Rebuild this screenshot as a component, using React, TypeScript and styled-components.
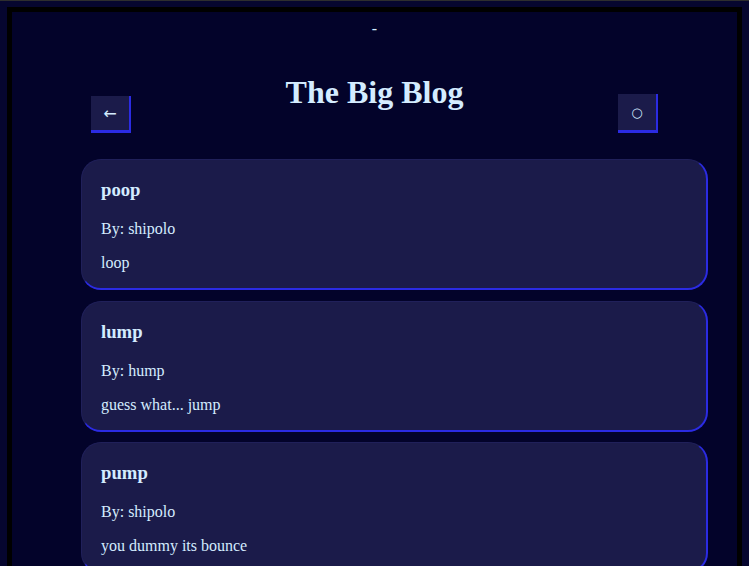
import React from "react";
import styled, { createGlobalStyle } from "styled-components";

const Global = createGlobalStyle`
  html {
    background: #06062f;
    border-top: 1px solid #2e2e2e;
  }
  body {
    margin: 6px 7px 0 7px;
    background: #06062f;
    font-family: "Liberation Serif", "Times New Roman", serif;
    color: #d4ecff;
  }
`;

const Frame = styled.div`
  border: 5px solid #000;
  background: #03032a;
  min-height: 600px;
  box-sizing: border-box;
  padding: 8px 29px 0;
`;

const Dash = styled.div`
  text-align: center;
  font-size: 16px;
  line-height: 18px;
  color: #d4ecff;
`;

const Header = styled.header`
  display: flex;
  align-items: flex-end;
  justify-content: space-between;
  padding: 0 50px;
  margin-top: 36px;
`;

const Title = styled.h1`
  margin: 0 0 22px;
  font-size: 32px;
  line-height: 37px;
  font-weight: bold;
  color: #d4ecff;
`;

const NavButton = styled.button<{ $tall?: boolean }>`
  width: 40px;
  height: ${(p) => (p.$tall ? 39 : 37)}px;
  box-sizing: border-box;
  background: #1b1b4a;
  color: #d4ecff;
  border: none;
  border-right: 2px solid #2b2be3;
  border-bottom: 3px solid #2b2be3;
  font-family: "DejaVu Sans", sans-serif;
  font-size: ${(p) => (p.$tall ? 13 : 16)}px;
  padding: 0;
  display: flex;
  align-items: center;
  justify-content: center;
`;

const List = styled.div`
  padding-left: 40px;
  margin-top: 26px;
`;

const Card = styled.article`
  display: flow-root;
  background: #1b1b4a;
  border-radius: 20px;
  border: 1px solid #20205a;
  border-right: 2px solid #2b2be3;
  border-bottom: 2px solid #2b2be3;
  padding: 0 20px 0 19px;
  margin-bottom: 10.5px;
`;

const PostTitle = styled.h3`
  font-size: 18.72px;
  margin: 19px 0;
  font-weight: bold;
`;

const Para = styled.p`
  font-size: 16px;
  margin: 16px 0;
`;

const posts = [
  { title: "poop", author: "shipolo", body: "loop" },
  { title: "lump", author: "hump", body: "guess what... jump" },
  { title: "pump", author: "shipolo", body: "you dummy its bounce" },
];

export default function App() {
  return (
    <>
      <Global />
      <Frame>
        <Dash>-</Dash>
        <Header>
          <NavButton>←</NavButton>
          <Title>The Big Blog</Title>
          <NavButton $tall>○</NavButton>
        </Header>
        <List>
          {posts.map((p) => (
            <Card key={p.title}>
              <PostTitle>{p.title}</PostTitle>
              <Para>By: {p.author}</Para>
              <Para>{p.body}</Para>
            </Card>
          ))}
        </List>
      </Frame>
    </>
  );
}
